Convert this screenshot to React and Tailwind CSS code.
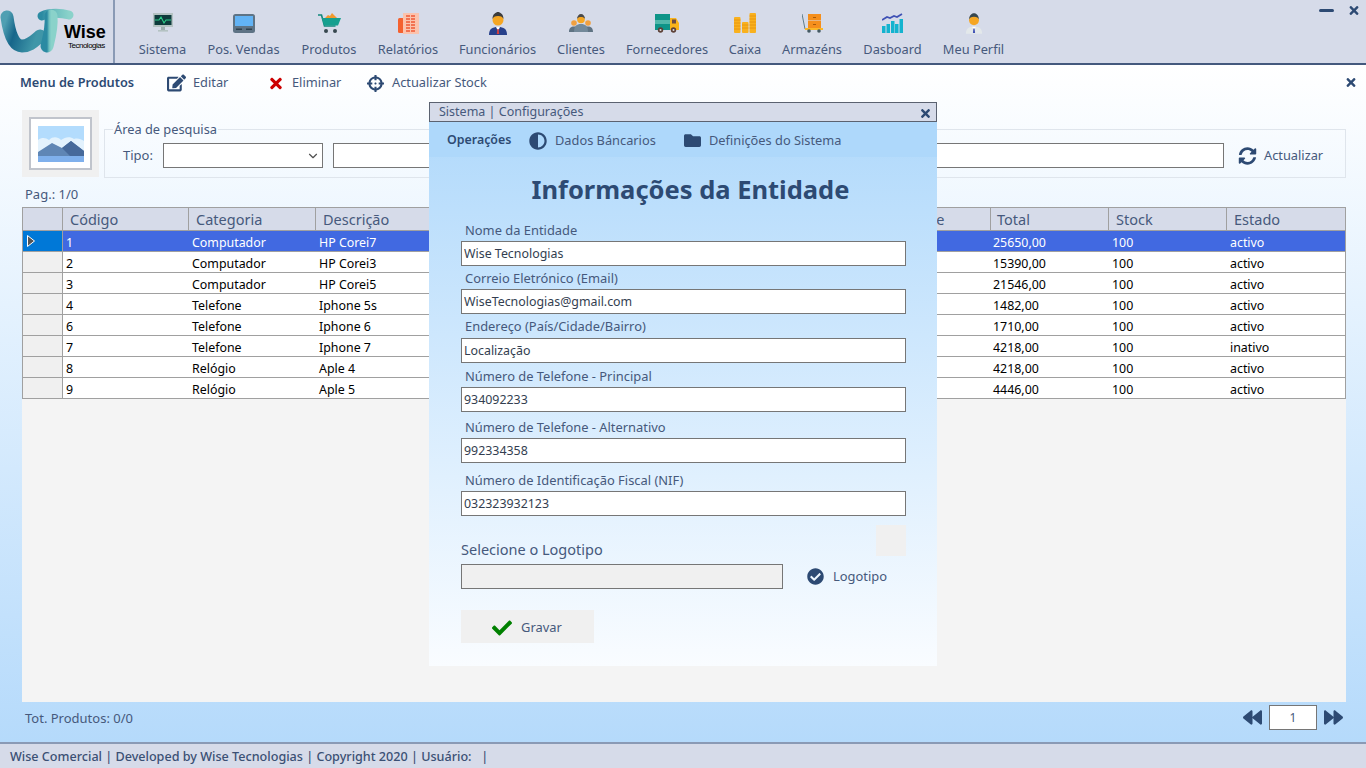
import React from 'react';
import {
  FaEdit, FaTimes, FaCrosshairs, FaSyncAlt, FaAdjust, FaFolder,
  FaCheckCircle, FaCheck, FaBackward, FaForward,
} from 'react-icons/fa';
import { ChevronDown } from 'lucide-react';

const FONT = "font-['Noto_Sans','Open_Sans',sans-serif]";

// Header icons
const SistemaIcon = () => (
  <svg width="22" height="20" viewBox="0 0 22 20">
    <rect x="1" y="0" width="20" height="14" fill="#b4c2c2" />
    <rect x="2.5" y="2" width="17" height="10" fill="#0d3b3c" />
    <path d="M3 7h4l2-3 3 6 2-3h5" fill="none" stroke="#2fd08a" strokeWidth="1.1" />
    <rect x="9" y="14" width="4" height="3" fill="#9fb0b0" />
    <rect x="6" y="17" width="10" height="1.6" fill="#b4c2c2" />
  </svg>
);
const VendasIcon = () => (
  <svg width="22" height="19" viewBox="0 0 22 19">
    <rect x="0" y="0" width="22" height="19" rx="2.5" fill="#5e7385" />
    <rect x="2" y="2" width="18" height="10" fill="#62b3f5" />
    <rect x="3" y="14.5" width="6" height="1.5" fill="#2f4250" />
    <rect x="13" y="14.5" width="6" height="1.5" fill="#2f4250" />
  </svg>
);
const CartIcon = () => (
  <svg width="23" height="22" viewBox="0 0 23 22">
    <path d="M7 6l3-3 2 1 2-3 3 3 2 2z" fill="#f29a2e" />
    <path d="M0 3h3.500l3 11h11" fill="none" stroke="#12897c" strokeWidth="1.600" />
    <path d="M4 6h19l-3 7.500H6z" fill="#16a08f" />
    <circle cx="8" cy="19" r="2" fill="#37474f" />
    <circle cx="17" cy="19" r="2" fill="#37474f" />
  </svg>
);
const RelatoriosIcon = () => (
  <svg width="21" height="21" viewBox="0 0 21 21">
    <rect x="0" y="5" width="6" height="15" rx="1.500" fill="#f4612f" />
    <rect x="5" y="0" width="16" height="21" fill="#fbc3ad" />
    <path d="M8 3h10M8 6h10M8 9h10M8 12h10M8 15h10M8 18h10" stroke="#ef5a34" strokeWidth="1.300" strokeDasharray="4 1" />
  </svg>
);
const PersonIcon = ({ suit = '#27408b', tie = '#d23f3f', hair = '#3c3c3c', width = 20 }) => (
  <svg width={width} height="23" viewBox="0 0 20 23">
    <path d="M1 23c0-6 3-8 9-8s9 2 9 8z" fill={suit} />
    <path d="M8 15l2 4 2-4z" fill="#fff" />
    <path d="M9.300 17h1.400l.5 5h-2.400z" fill={tie} />
    <circle cx="10" cy="8" r="5.500" fill="#f5a623" />
    <path d="M4.500 7C4.500 2 8 0 10 0s5.500 2 5.500 7c-1-2-2-3-5.500-3S5.500 5 4.500 7z" fill={hair} />
  </svg>
);
const ClientesIcon = () => (
  <svg width="24" height="18" viewBox="0 0 24 18">
    <circle cx="5" cy="9" r="2.800" fill="#f0a040" />
    <circle cx="19" cy="9" r="2.800" fill="#f0a040" />
    <path d="M0 18c0-4 2-5.500 5-5.500s5 1.500 5 5.500zM14 18c0-4 2-5.500 5-5.500s5 1.500 5 5.500z" fill="#5f7383" />
    <path d="M5 18c0-6 2.500-8 7-8s7 2 7 8z" fill="#73899a" />
    <circle cx="12" cy="5.500" r="3.800" fill="#f5a623" />
    <path d="M8 5c0-3 2-5 4-5s4 2 4 5c-1-1.500-2-2-4-2s-3 .5-4 2z" fill="#4a4a4a" />
  </svg>
);
const TruckIcon = () => (
  <svg width="24" height="19" viewBox="0 0 24 19">
    <rect x="0" y="0" width="15" height="16" fill="#0e9488" />
    <rect x="0" y="6" width="15" height="4" fill="#52b8ab" />
    <path d="M15 4h6l3 5v7h-9z" fill="#f9b31a" />
    <rect x="17" y="5.500" width="4" height="4" fill="#6d4c41" />
    <circle cx="5.500" cy="16" r="2.700" fill="#5d4037" />
    <circle cx="5.500" cy="16" r="1" fill="#ddd" />
    <circle cx="18.500" cy="16" r="2.700" fill="#5d4037" />
    <circle cx="18.500" cy="16" r="1" fill="#ddd" />
  </svg>
);
const CoinsIcon = () => (
  <svg width="22" height="20" viewBox="0 0 22 20">
    <rect x="0" y="4" width="6.500" height="16" rx="1" fill="#f9b11e" />
    <rect x="8" y="9" width="6.500" height="11" rx="1" fill="#f9b11e" />
    <rect x="15.500" y="0" width="6.500" height="20" rx="1" fill="#f9b11e" />
    <path d="M0 7h6.500M0 10h6.500M0 13h6.500M0 16h6.500M8 12h6.500M8 15h6.500M15.500 3h6.500M15.500 6h6.500M15.500 9h6.500M15.500 12h6.500M15.500 15h6.500" stroke="#e48f0c" strokeWidth="0.800" />
  </svg>
);
const ArmazemIcon = () => (
  <svg width="21" height="19" viewBox="0 0 21 19">
    <path d="M0 0l3 15" stroke="#607d8b" strokeWidth="1" />
    <rect x="6" y="0" width="13" height="6.500" fill="#f58f1c" />
    <rect x="6" y="7" width="13" height="7" fill="#f58f1c" />
    <rect x="11" y="3" width="3" height="1" fill="#a85a0a" />
    <rect x="11" y="10" width="3" height="1" fill="#a85a0a" />
    <rect x="3" y="14" width="18" height="2" fill="#fbb829" />
    <circle cx="7" cy="17" r="1.800" fill="#455a64" />
    <circle cx="17" cy="17" r="1.800" fill="#455a64" />
  </svg>
);
const DashIcon = () => (
  <svg width="21" height="20" viewBox="0 0 21 20">
    <rect x="0" y="13" width="3.500" height="7" fill="#14b3cf" />
    <rect x="4.500" y="11" width="3.500" height="9" fill="#14b3cf" />
    <rect x="9" y="8" width="3.500" height="12" fill="#14b3cf" />
    <rect x="13" y="11" width="3.500" height="9" fill="#14b3cf" />
    <rect x="17.500" y="6" width="3.500" height="14" fill="#14b3cf" />
    <path d="M0 7l5-3 3 1 4-2 3 1 5-3" fill="none" stroke="#3f51b5" strokeWidth="1.800" />
  </svg>
);

const NAV = [
  { label: 'Sistema', w: 'w-[47px]', icon: <SistemaIcon /> },
  { label: 'Pos. Vendas', w: 'w-[73px]', icon: <VendasIcon /> },
  { label: 'Produtos', w: 'w-[56px]', icon: <CartIcon /> },
  { label: 'Relatórios', w: 'w-[60px]', icon: <RelatoriosIcon /> },
  { label: 'Funcionários', w: 'w-[77px]', icon: <PersonIcon /> },
  { label: 'Clientes', w: 'w-[48px]', icon: <ClientesIcon /> },
  { label: 'Fornecedores', w: 'w-[82px]', icon: <TruckIcon /> },
  { label: 'Caixa', w: 'w-[32px]', icon: <CoinsIcon /> },
  { label: 'Armazéns', w: 'w-[60px]', icon: <ArmazemIcon /> },
  { label: 'Dasboard', w: 'w-[59px]', icon: <DashIcon /> },
  { label: 'Meu Perfil', w: 'w-[61px]', icon: <PersonIcon suit="#e3e8ea" tie="#3f51b5" hair="#37474f" width={18} /> },
];

const ROWS = [
  ['1', 'Computador', 'HP Corei7', '25650,00', '100', 'activo'],
  ['2', 'Computador', 'HP Corei3', '15390,00', '100', 'activo'],
  ['3', 'Computador', 'HP Corei5', '21546,00', '100', 'activo'],
  ['4', 'Telefone', 'Iphone 5s', '1482,00', '100', 'activo'],
  ['6', 'Telefone', 'Iphone 6', '1710,00', '100', 'activo'],
  ['7', 'Telefone', 'Iphone 7', '4218,00', '100', 'inativo'],
  ['8', 'Relógio', 'Aple 4', '4218,00', '100', 'activo'],
  ['9', 'Relógio', 'Aple 5', '4446,00', '100', 'activo'],
];

const FIELDS = [
  { label: 'Nome da Entidade', value: 'Wise Tecnologias', mt: 'mt-0', lh: 'leading-[22px]' },
  { label: 'Correio Eletrónico (Email)', value: 'WiseTecnologias@gmail.com', mt: 'mt-px', lh: 'leading-[22px]' },
  { label: 'Endereço (País/Cidade/Bairro)', value: 'Localização', mt: 'mt-[2px]', lh: 'leading-[20px]' },
  { label: 'Número de Telefone - Principal', value: '934092233', mt: 'mt-[2px]', lh: 'leading-[22px]' },
  { label: 'Número de Telefone - Alternativo', value: '992334358', mt: 'mt-[4px]', lh: 'leading-[22px]' },
  { label: 'Número de Identificação Fiscal (NIF)', value: '032323932123', mt: 'mt-[6px]', lh: 'leading-[22px]' },
];

const COLS = 'grid grid-cols-[40px_126px_127px_545px_130px_118px_118px_1fr]';

function Logo() {
  return (
    <div className="relative h-full w-[113px] shrink-0 overflow-hidden">
      <svg width="113" height="63" viewBox="0 0 113 63" className="block">
        <defs>
          <linearGradient id="wtLeft" x1="0" y1="0" x2="1" y2="0.3">
            <stop offset="0" stopColor="#4f9fb2" />
            <stop offset="0.35" stopColor="#17668a" />
            <stop offset="1" stopColor="#3f96a8" />
          </linearGradient>
          <linearGradient id="wtRight" x1="0" y1="0" x2="1" y2="0">
            <stop offset="0" stopColor="#2b8aa2" />
            <stop offset="0.5" stopColor="#6fc0c0" />
            <stop offset="1" stopColor="#8ad2ca" />
          </linearGradient>
        </defs>
        <path d="M7 17C9 32 13 46 22 46C30 46 34 41 40 36" fill="none" stroke="url(#wtLeft)" strokeWidth="13" strokeLinecap="round" />
        <path d="M42 16C50 12 62 13 69 15" fill="none" stroke="url(#wtRight)" strokeWidth="9" strokeLinecap="round" />
        <path d="M51 16C52 28 49 38 47 46" fill="none" stroke="url(#wtRight)" strokeWidth="13" strokeLinecap="round" />
      </svg>
      <span className="absolute left-[64px] top-[23px] font-['Liberation_Sans',sans-serif] text-[18px] leading-[19px] font-bold text-black">Wise</span>
      <span className="absolute left-[68px] top-[42px] font-['Liberation_Sans',sans-serif] text-[8px] leading-[7px] tracking-[-0.5px] text-black">Tecnologias</span>
    </div>
  );
}

function Header() {
  return (
    <header className="relative flex h-[65px] shrink-0 border-b-2 border-[#44597d] bg-[#d6dbe9]">
      <Logo />
      <div className="h-full w-[2px] bg-[#8a9ab5]" />
      <nav className="ml-[24px] flex gap-[21px]">
        {NAV.map((n) => (
          <div key={n.label} className={`flex flex-col items-center ${n.w}`}>
            <div className="mt-[11px] flex h-[24px] items-center justify-center">{n.icon}</div>
            <span className="mt-[4px] whitespace-nowrap text-[12.8px] leading-[20px] text-[#46597c]">{n.label}</span>
          </div>
        ))}
      </nav>
      <div className="absolute right-[6px] top-[4px] flex items-center gap-[14px] text-[#2d4a73]">
        <div className="h-[3px] w-[15px] rounded-sm bg-[#2d4a73]" />
        <FaTimes className="h-[13px] w-[12px]" />
      </div>
    </header>
  );
}

function Toolbar() {
  return (
    <div className="relative flex h-[35px] items-center pl-[20px] pt-[1px] text-[12.8px] text-[#46597c]">
      <span className="w-[147px] text-[12.75px] font-semibold text-[#2d4a73]">Menu de Produtos</span>
      <FaEdit className="h-[18px] w-[19px] text-[#2d4a73]" />
      <span className="ml-[7px] w-[75px]">Editar</span>
      <FaTimes className="h-[17px] w-[16px] text-[#cc0000]" />
      <span className="ml-[8px] w-[75px]">Eliminar</span>
      <FaCrosshairs className="h-[17px] w-[17px] text-[#2d4a73]" />
      <span className="ml-[8px]">Actualizar Stock</span>
      <FaTimes className="absolute right-[9px] top-[11px] h-[13px] w-[12px] text-[#2d4a73]" />
    </div>
  );
}

function SearchRow() {
  return (
    <div className="ml-[22px] mr-[20px] mt-[10px] flex gap-[5px] text-[13px] text-[#46597c]">
      <div className="flex h-[67px] w-[77px] shrink-0 items-center justify-center bg-[#f0f0f0]">
        <div className="flex h-[53px] w-[63px] items-center justify-center border-2 border-[#c0c4cc] bg-white">
          <svg width="46" height="36" viewBox="0 0 46 36">
            <rect width="46" height="36" fill="#b3dcfd" />
            <path d="M0 14c4-3 8-2 11 0 4-4 9-3 12 0 4-3 9-4 13-1 4-1 7 0 10 2v15H0z" fill="#e3f2fd" />
            <path d="M0 26l14-9 10 5 9-7 13 10v11H0z" fill="#5f86b5" />
            <path d="M24 22l9-7 13 10v5H32z" fill="#46699a" />
            <rect y="30" width="46" height="6" fill="#7fb0ec" />
          </svg>
        </div>
      </div>
      <fieldset className="mt-[12px] h-[56px] min-w-0 flex-1 border border-[#dfe5ec] pl-[8px]">
        <legend className="px-[1px] text-[12.8px] leading-[15px]">Área de pesquisa</legend>
        <div className="flex h-[37px] items-center pl-[10px]">
          <span className="w-[40px]">Tipo:</span>
          <div className="flex h-[25px] w-[160px] items-center justify-end border border-[#767676] bg-white pr-[2px]">
            <ChevronDown className="h-[14px] w-[14px] text-[#505050]" strokeWidth={2} />
          </div>
          <input readOnly className="ml-[10px] h-[25px] w-[891px] border border-[#767676] bg-white" />
          <FaSyncAlt className="ml-[14px] h-[18px] w-[19px] text-[#2d4a73]" />
          <span className="ml-[7px] text-[12.8px]">Actualizar</span>
        </div>
      </fieldset>
    </div>
  );
}

function ProductTable() {
  return (
    <div className="ml-[22px] mr-[20px] min-h-0 flex-1 bg-[#f4f4f4]">
      <div className="border border-b-0 border-[#a0a0a0]">
        <div className={`${COLS} h-[22px] items-center bg-[#d6dbe9] text-[14.5px] leading-[22px] text-[#46597c]`}>
          <div className="h-full border-r border-[#a0a0a0]" />
          <div className="border-r border-[#a0a0a0] pl-[7px]">Código</div>
          <div className="border-r border-[#a0a0a0] pl-[7px]">Categoria</div>
          <div className="border-r border-[#a0a0a0] pl-[7px]">Descrição</div>
          <div className="border-r border-[#a0a0a0] pl-[3px]">Quantidade</div>
          <div className="border-r border-[#a0a0a0] pl-[6px]">Total</div>
          <div className="border-r border-[#a0a0a0] pl-[7px]">Stock</div>
          <div className="pl-[7px]">Estado</div>
        </div>
      </div>
      <div className="border-x border-t border-[#a0a0a0]">
        {ROWS.map((r, i) => {
          const selected = i === 0;
          return (
            <div
              key={r[0]}
              className={`${COLS} h-[21px] overflow-hidden border-b border-[#a0a0a0] text-[12.4px] leading-[23px] ${selected ? 'bg-[#4169e1] text-white' : 'bg-white text-black'}`}>
              <div className={`flex h-[20px] items-center border-r border-[#a0a0a0] ${selected ? 'bg-[#0078d7]' : 'bg-[#f0f0f0]'}`}>
                {selected && (
                  <svg width="10" height="14" viewBox="0 0 10 14" className="ml-[3px]">
                    <path d="M1.500 1.500L8.500 7L1.500 12.500z" fill="#555" stroke="#fff" strokeWidth="1" />
                  </svg>
                )}
              </div>
              <div className="pl-[3px]">{r[0]}</div>
              <div className="pl-[3px]">{r[1]}</div>
              <div className="pl-[3px]">{r[2]}</div>
              <div />
              <div className="pl-[2px]">{r[3]}</div>
              <div className="pl-[3px]">{r[4]}</div>
              <div className="pl-[3px]">{r[5]}</div>
            </div>
          );
        })}
      </div>
    </div>
  );
}

function Pager() {
  return (
    <div className="flex h-[40px] shrink-0 items-start justify-between pl-[25px] pr-[23px] pt-[3px] text-[13px] text-[#46597c]">
      <span className="leading-[27px]">Tot. Produtos: 0/0</span>
      <div className="flex items-center gap-[7px] text-[#2d4a73]">
        <FaBackward className="h-[19px] w-[19px]" />
        <div className="flex h-[25px] w-[48px] items-center justify-center border border-[#767676] bg-white text-[12px] text-[#46597c]">1</div>
        <FaForward className="h-[19px] w-[19px]" />
      </div>
    </div>
  );
}

function ConfigModal() {
  return (
    <div className="absolute left-[429px] top-[102px] flex h-[564px] w-[508px] flex-col bg-gradient-to-b from-[#aed8fb] to-[#f9fcff] text-[12.9px] text-[#46597c]">
      <div className="flex h-[20px] shrink-0 items-center justify-between border border-[#5b6270] bg-[#d6dbe9] pl-[9px] pr-[5px] text-[12.5px]">
        <span>Sistema | Configurações</span>
        <FaTimes className="mt-[2px] h-[13px] w-[11px] text-[#2d4a73]" />
      </div>
      <div className="flex h-[35px] shrink-0 items-center bg-[#aed8fb] pl-[18px] pt-[2px] text-[12.8px]">
        <span className="w-[82px] text-[12.4px] font-semibold text-[#2d4a73]">Operações</span>
        <FaAdjust className="h-[18px] w-[18px] text-[#2d4a73]" />
        <span className="ml-[8px] w-[128px]">Dados Báncarios</span>
        <FaFolder className="h-[17px] w-[19px] text-[#2d4a73]" />
        <span className="ml-[7px]">Definições do Sistema</span>
      </div>
      <h1 className="mt-[14px] h-[48px] pl-[15px] text-center text-[25.5px] leading-[36px] font-bold text-[#2d4a73]">Informações da Entidade</h1>
      <div className="pl-[32px] pr-[31px]">
        {FIELDS.map((f) => (
          <div key={f.label} className={f.mt}>
            <div className={`h-[22px] pl-[4px] ${f.lh}`}>{f.label}</div>
            <input
              readOnly
              defaultValue={f.value}
              className="block h-[25px] w-full border border-[#767676] bg-white pl-[2px] text-[12.4px] text-[#333e50]" />
          </div>
        ))}
        <div className="mt-[9px] flex h-[39px] justify-between">
          <span className="self-end pb-[5px] text-[14.5px] leading-[20px]">Selecione o Logotipo</span>
          <div className="h-[31px] w-[30px] bg-[#f0f0f0]" />
        </div>
        <div className="flex items-center">
          <div className="h-[25px] w-[322px] border border-[#767676] bg-[#f0f0f0]" />
          <FaCheckCircle className="ml-[24px] h-[17px] w-[17px] text-[#2d4a73]" />
          <span className="ml-[9px]">Logotipo</span>
        </div>
        <button className="mt-[21px] flex h-[33px] w-[133px] items-center bg-[#f0f0f0] pl-[29px] pt-[2px]">
          <FaCheck className="h-[20px] w-[24px] text-[#008000]" />
          <span className="ml-[7px] text-[#46597c]">Gravar</span>
        </button>
      </div>
    </div>
  );
}

export default function App() {
  return (
    <div className={`relative flex h-screen w-full flex-col overflow-hidden ${FONT}`}>
      <Header />
      <main className="flex min-h-0 flex-1 flex-col bg-gradient-to-b from-white to-[#b5dafb]">
        <Toolbar />
        <SearchRow />
        <div className="flex h-[29px] shrink-0 items-center pl-[25px] pt-[4px] text-[13px] text-[#46597c]">Pag.: 1/0</div>
        <ProductTable />
        <Pager />
      </main>
      <footer className="flex h-[26px] shrink-0 items-center border-t-2 border-[#8a9ab5] bg-[#d6dbe9] pl-[10px] pt-[2px] text-[12.6px] font-medium text-[#3b5074]">
        Wise Comercial | Developed by Wise Tecnologias | Copyright 2020 | Usuário:&nbsp;&nbsp; |
      </footer>
      <ConfigModal />
    </div>
  );
}
